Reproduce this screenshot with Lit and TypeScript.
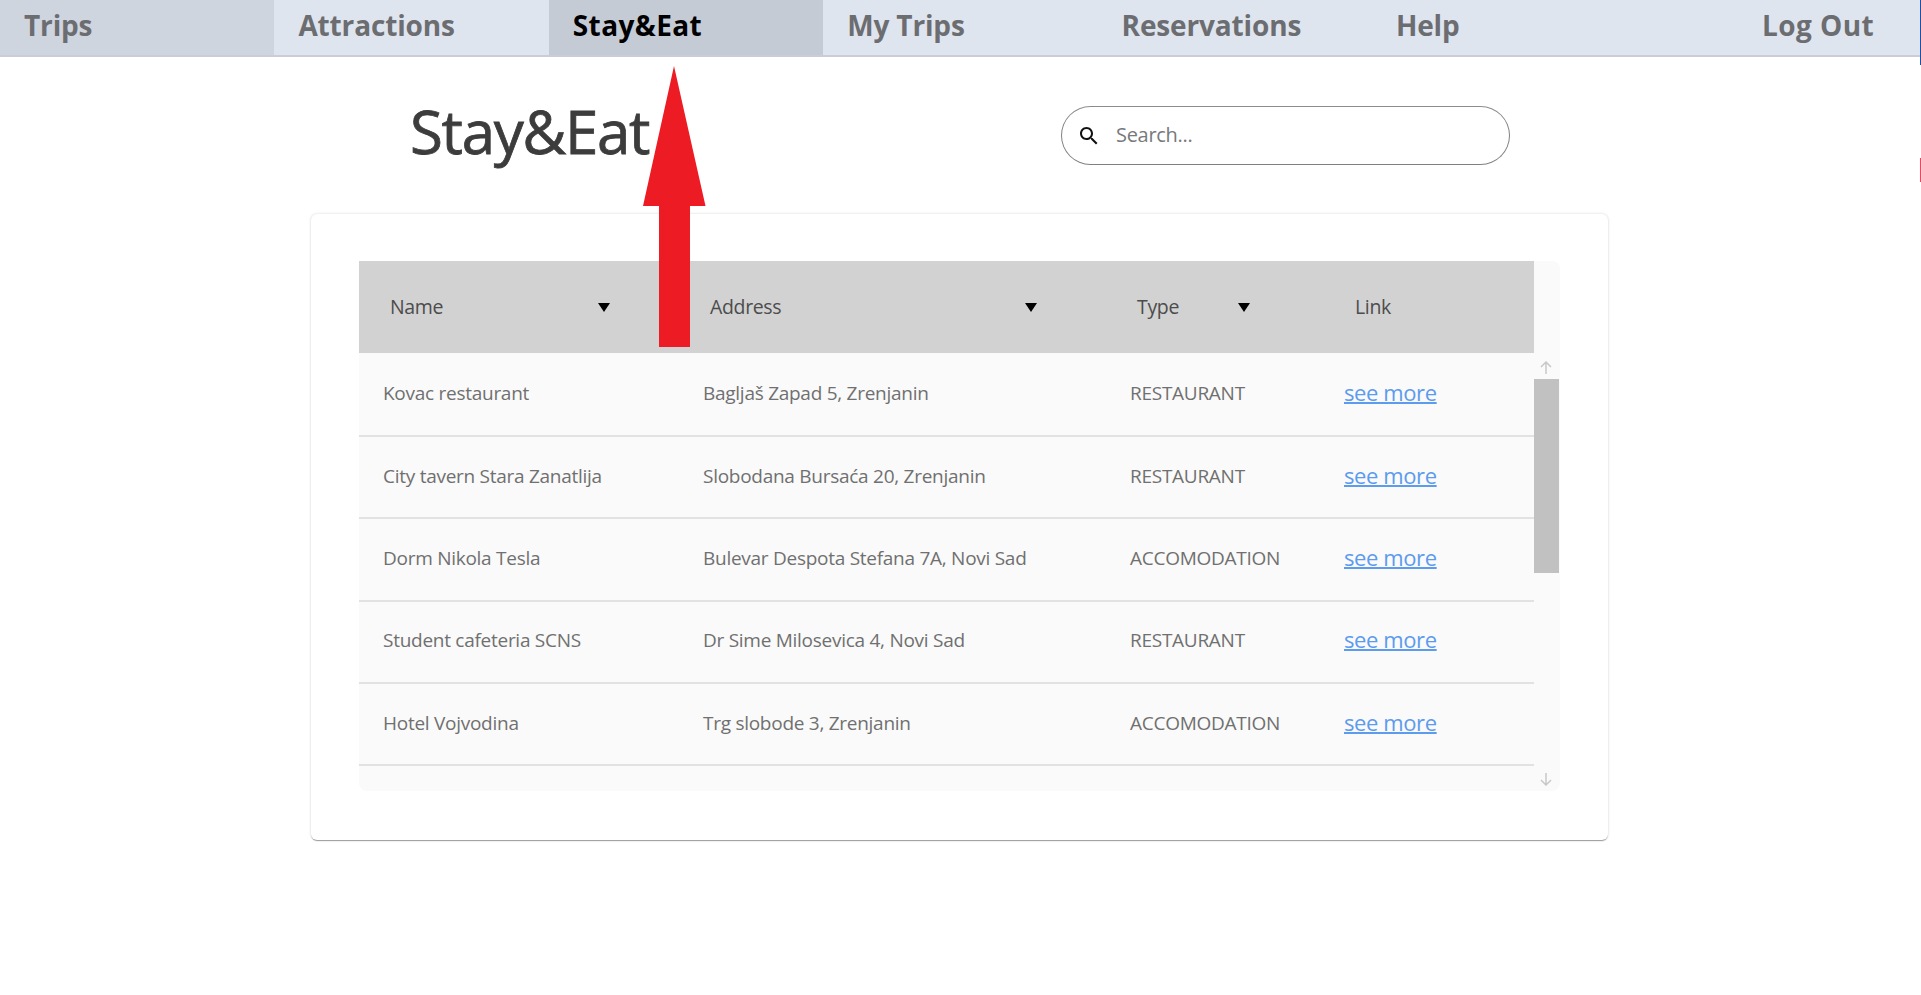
import { LitElement, css, html } from 'lit';
import { customElement } from 'lit/decorators.js';

type Place = { name: string; address: string; type: string };

const PLACES: Place[] = [
  { name: 'Kovac restaurant', address: 'Bagljaš Zapad 5, Zrenjanin', type: 'RESTAURANT' },
  { name: 'City tavern Stara Zanatlija', address: 'Slobodana Bursaća 20, Zrenjanin', type: 'RESTAURANT' },
  { name: 'Dorm Nikola Tesla', address: 'Bulevar Despota Stefana 7A, Novi Sad', type: 'ACCOMODATION' },
  { name: 'Student cafeteria SCNS', address: 'Dr Sime Milosevica 4, Novi Sad', type: 'RESTAURANT' },
  { name: 'Hotel Vojvodina', address: 'Trg slobode 3, Zrenjanin', type: 'ACCOMODATION' }
];

const NAV = ['Trips', 'Attractions', 'Stay&Eat', 'My Trips', 'Reservations', 'Help'];

@customElement('app-root')
export class AppRoot extends LitElement {
  static override styles = css`
    :host {
      display: block;
      position: relative;
      height: 995px;
      overflow: hidden;
      background: #fff;
      font-family: 'Open Sans', 'Noto Sans', sans-serif;
    }

    nav {
      display: grid;
      grid-template-columns: repeat(6, 274.4px) 1fr;
      height: 55px;
      margin-right: 1px;
      background: #dfe5ef;
      border-bottom: 2px solid #c8cdd8;
    }

    nav a {
      display: flex;
      align-items: center;
      padding: 0 0 5px 24px;
      font-size: 28px;
      font-weight: 700;
      letter-spacing: -0.15px;
      color: #6c6d71;
    }

    nav a.first {
      background: #cfd5df;
    }

    nav a.active {
      background: #c5cbd5;
      letter-spacing: 0.4px;
      color: #000;
    }

    nav a.logout {
      justify-content: flex-end;
      padding: 0 46px 5px 0;
      letter-spacing: 0.4px;
    }

    .head {
      display: flex;
      align-items: center;
      height: 59px;
      padding: 49px 0 49px 410px;
    }

    h1 {
      width: 651px;
      margin: -9px 0 0;
      font-size: 60px;
      font-weight: 400;
      letter-spacing: -1.3px;
      -webkit-text-stroke: 0.8px #3c3c3c;
      color: #3c3c3c;
    }

    .search {
      display: flex;
      align-items: center;
      box-sizing: border-box;
      width: 449px;
      height: 59px;
      padding-left: 15px;
      border: 1px solid #808080;
      border-top-color: #8c8c8c;
      border-radius: 30px;
    }

    .search svg {
      flex: none;
      width: 24px;
      height: 24px;
      fill: #111;
    }

    .search input {
      flex: 1;
      min-width: 0;
      margin: -2px 0 0 15px;
      padding: 0;
      border: 0;
      outline: 0;
      background: none;
      font: inherit;
      font-size: 20px;
      letter-spacing: -0.3px;
    }

    .search input::placeholder {
      color: #77797c;
      opacity: 1;
    }

    .card {
      box-sizing: border-box;
      width: 1297px;
      height: 626px;
      margin-left: 311px;
      padding: 47px 48px;
      border-radius: 6px;
      box-shadow: 0 2px 1px -1px rgba(0, 0, 0, 0.25), 0 1px 1px 0 rgba(0, 0, 0, 0.14), 0 0 3px 0 rgba(0, 0, 0, 0.16);
    }

    .table {
      display: flex;
      height: 530px;
      overflow: hidden;
      border-radius: 8px;
      border-top-left-radius: 0;
      background: #fafafa;
    }

    .cols {
      width: 1175px;
    }

    .row {
      display: grid;
      grid-template-columns: 320px 427px 213px 1fr;
      align-items: center;
    }

    .row.titles {
      height: 92px;
      margin-bottom: 1.5px;
      background: #d2d2d2;
      font-size: 19.5px;
      letter-spacing: -0.35px;
      color: #4c4c4c;
    }

    .titles div {
      display: flex;
      align-items: center;
      justify-content: space-between;
      padding: 0 69px 0 31px;
    }

    .titles div.plain {
      padding-left: 36px;
    }

    .titles span {
      margin-top: -2px;
    }

    .titles svg {
      width: 12px;
      height: 9px;
      fill: #000;
    }

    .row.place {
      box-sizing: border-box;
      height: 82.4px;
      padding-bottom: 3px;
      border-bottom: 2px solid #e2e2e2;
      font-size: 19px;
      letter-spacing: -0.27px;
      color: #707070;
    }

    .place div {
      padding-left: 24px;
    }

    .place div.more {
      padding: 0 0 2px 25px;
    }

    .place a {
      font-size: 22px;
      letter-spacing: -0.4px;
      color: #5c9bee;
      text-decoration: underline;
      text-decoration-thickness: 1.5px;
    }

    .scrollbar {
      display: flex;
      flex-direction: column;
      align-items: center;
      flex: none;
      width: 25px;
      padding-bottom: 5px;
      box-sizing: border-box;
    }

    .scrollbar svg {
      flex: none;
      width: 12px;
      height: 13px;
      margin-right: 2px;
      fill: none;
      stroke: #c8c8c8;
      stroke-width: 1.5;
    }

    .scrollbar svg.up {
      margin-top: 100px;
    }

    .scrollbar svg.down {
      margin-top: auto;
    }

    .thumb {
      flex: none;
      width: 100%;
      height: 194px;
      margin-top: 5px;
      background: #c1c1c1;
    }

    .pointer {
      position: absolute;
      left: 640px;
      top: 64px;
      width: 70px;
      height: 285px;
      fill: #ed1c24;
    }

    .edge {
      position: absolute;
      right: 0;
      width: 1px;
    }

    .edge.blue {
      top: 0;
      height: 65px;
      background: #1c50a8;
    }

    .edge.red {
      top: 158px;
      height: 24px;
      background: #e8475f;
    }
  `;

  private triangle() {
    return html`<svg viewBox="0 0 12 9"><path d="M0 0h12L6 9z"></path></svg>`;
  }

  protected override render() {
    return html`
      <nav>
        ${NAV.map((item, i) => html`
          <a class=${i === 0 ? 'first' : i === 2 ? 'active' : ''}>${item}</a>
        `)}
        <a class="logout">Log Out</a>
      </nav>

      <div class="head">
        <h1>Stay&amp;Eat</h1>
        <label class="search">
          <svg viewBox="0 0 24 24">
            <path d="M15.5 14h-.79l-.28-.27C15.41 12.59 16 11.11 16 9.5 16 5.91 13.09 3 9.5 3S3 5.91 3 9.5 5.91 16 9.5 16c1.61 0 3.09-.59 4.23-1.57l.27.28v.79l5 4.99L20.49 19l-4.99-5zm-6 0C7.01 14 5 11.99 5 9.5S7.01 5 9.5 5 14 7.01 14 9.5 11.99 14 9.5 14z"></path>
          </svg>
          <input placeholder="Search..." />
        </label>
      </div>

      <section class="card">
        <div class="table">
          <div class="cols">
            <div class="row titles">
              <div><span>Name</span>${this.triangle()}</div>
              <div><span>Address</span>${this.triangle()}</div>
              <div><span>Type</span>${this.triangle()}</div>
              <div class="plain"><span>Link</span></div>
            </div>
            ${PLACES.map((place) => html`
              <div class="row place">
                <div>${place.name}</div>
                <div>${place.address}</div>
                <div>${place.type}</div>
                <div class="more"><a>see more</a></div>
              </div>
            `)}
          </div>
          <div class="scrollbar">
            <svg class="up" viewBox="0 0 12 13"><path d="M6 13V1M1 6l5-5 5 5"></path></svg>
            <div class="thumb"></div>
            <svg class="down" viewBox="0 0 12 13"><path d="M6 0v12M1 7l5 5 5-5"></path></svg>
          </div>
        </div>
      </section>

      <svg class="pointer" viewBox="0 0 70 285">
        <path d="M34 2L65.5 142H50V283H19V142H3z"></path>
      </svg>
      <div class="edge blue"></div>
      <div class="edge red"></div>
    `;
  }
}
